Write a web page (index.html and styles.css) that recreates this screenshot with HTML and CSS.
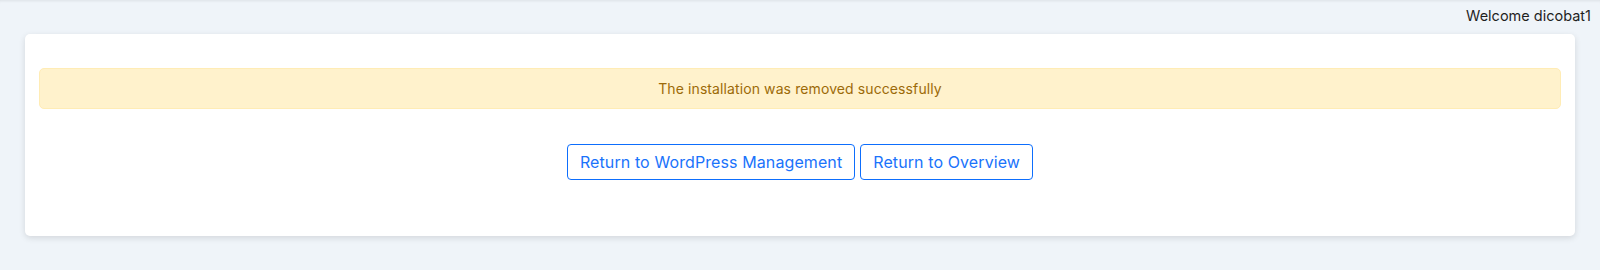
FILE: index.html
```html
<!DOCTYPE html>
<html>
<head>
    <title>Remove Installation</title>
    <link rel="stylesheet" href="styles.css">
</head>
<body>
    <!-- Top bar with user greeting -->
    <div class="topbar">
        <span class="welcome">Welcome dicobat1</span>
    </div>

    <!-- Main card -->
    <div class="card">
        <div class="alert-warning">The installation was removed successfully</div>

        <div class="actions">
            <a class="btn-outline" href="#">Return to WordPress Management</a>
            <a class="btn-outline" href="#">Return to Overview</a>
        </div>
    </div>
</body>
</html>
```

FILE: styles.css
```css
/* Page basics */
body {
    margin: 0;
    padding: 0;
    background-color: #eff4f9;
    font-family: Inter, "Open Sans", Arial, sans-serif;
    color: #212529;
    box-shadow: inset 0 3px 3px -2px rgba(0, 0, 0, 0.08);
    min-height: 270px;
}

/* Greeting row */
.topbar {
    display: flex;
    justify-content: flex-end;
    height: 34px;
    padding-right: 9px;
    box-sizing: border-box;
}

.welcome {
    font-size: 14.5px;
    line-height: 32px;
    color: #1f1f1f;
}

/* Card */
.card {
    margin: 0 25px;
    background-color: #ffffff;
    border-radius: 5px;
    box-shadow: 0 2px 6px rgba(0, 0, 0, 0.12);
    padding: 34px 14px 56px 14px;
    height: 202px;
    box-sizing: border-box;
}

/* Alert box */
.alert-warning {
    height: 41px;
    line-height: 39px;
    box-sizing: border-box;
    background-color: #fff2cc;
    border: 1px solid #ffecb5;
    border-radius: 5px;
    text-align: center;
    font-size: 14px;
    letter-spacing: 0.1px;
    color: #9c6a08;
}

/* Buttons row */
.actions {
    display: flex;
    justify-content: center;
    gap: 5px;
    margin-top: 35px;
}

.btn-outline {
    display: inline-block;
    height: 36px;
    line-height: 34px;
    box-sizing: border-box;
    padding: 0 12px;
    border: 1px solid #0d6efd;
    border-radius: 4px;
    color: #1a73fb;
    font-size: 16px;
    letter-spacing: 0.1px;
    text-decoration: none;
    background-color: #ffffff;
}
```
